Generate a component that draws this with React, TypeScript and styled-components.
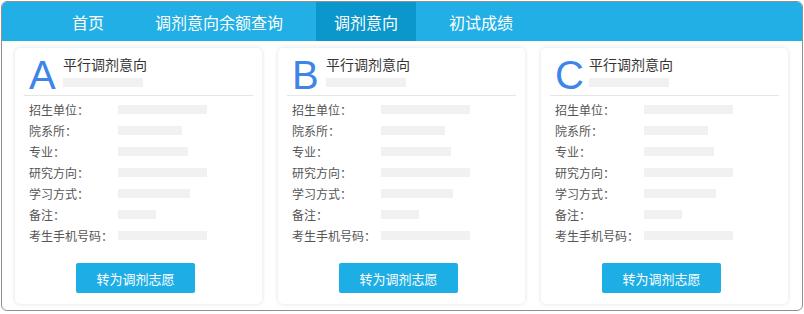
import styled, { createGlobalStyle } from "styled-components";

const GlobalStyle = createGlobalStyle`
  body {
    margin: 1px;
    background: #fff;
    font-family: "Liberation Sans", "Noto Sans CJK SC", sans-serif;
  }
`;

const Frame = styled.div`
  box-sizing: border-box;
  width: 802px;
  height: 310px;
  border: 1px solid #8f8f8f;
  border-radius: 6px;
  overflow: hidden;
  background: #fff;
`;

const Nav = styled.div`
  display: flex;
  gap: 15px;
  height: 39px;
  padding-left: 52px;
  background: #21afe6;
`;

const Tab = styled.div<{ $active?: boolean }>`
  display: flex;
  align-items: center;
  padding: 0 18px;
  font-family: "Noto Sans CJK SC", sans-serif;
  font-size: 16px;
  color: #fff;
  background: ${(p) => (p.$active ? "#0c97cc" : "transparent")};
`;

const Cards = styled.div`
  display: grid;
  grid-template-columns: repeat(3, 247px);
  column-gap: 16px;
  padding: 7px 13px 0;
`;

const Card = styled.div`
  display: flex;
  flex-direction: column;
  height: 256px;
  box-sizing: border-box;
  padding: 7px 9px 0;
  border-radius: 5px;
  background: #fff;
  box-shadow: 0 0 4px rgba(0, 0, 0, 0.13);
`;

const Header = styled.div`
  display: flex;
  height: 40px;
  padding: 0 5px;
  border-bottom: 1px solid #e6e6e6;
`;

const Letter = styled.div`
  width: 34px;
  font-size: 40px;
  line-height: 41px;
  color: #3d86e8;
`;

const TitleBox = styled.div`
  display: flex;
  flex-direction: column;
`;

const Title = styled.div`
  font-family: "Noto Sans CJK SC", sans-serif;
  font-size: 14px;
  line-height: 18px;
  color: #333;
`;

const Bar = styled.div<{ $w: number }>`
  width: ${(p) => p.$w}px;
  height: 9px;
  background: #f1f1f1;
`;

const TitleBar = styled(Bar)`
  margin-top: 5px;
`;

const Rows = styled.div`
  margin-top: 3px;
  padding: 0 5px;
`;

const Row = styled.div`
  display: flex;
  align-items: center;
  height: 21px;
`;

const Label = styled.div`
  width: 89px;
  font-family: "Noto Sans CJK SC", sans-serif;
  font-size: 12px;
  color: #555;
`;

const Button = styled.div`
  align-self: flex-start;
  margin: 17px 0 0 52px;
  width: 119px;
  height: 30px;
  border-radius: 2px;
  background: #1eaee6;
  color: #fff;
  font-family: "Noto Sans CJK SC", sans-serif;
  font-size: 13px;
  display: flex;
  align-items: center;
  justify-content: center;
`;

const fields: [string, number][] = [
  ["招生单位：", 89],
  ["院系所：", 64],
  ["专业：", 70],
  ["研究方向：", 89],
  ["学习方式：", 72],
  ["备注：", 38],
  ["考生手机号码：", 89],
];

const IntentCard = ({ letter }: { letter: string }) => (
  <Card>
    <Header>
      <Letter>{letter}</Letter>
      <TitleBox>
        <Title>平行调剂意向</Title>
        <TitleBar $w={80} />
      </TitleBox>
    </Header>
    <Rows>
      {fields.map(([label, w]) => (
        <Row key={label}>
          <Label>{label}</Label>
          <Bar $w={w} />
        </Row>
      ))}
    </Rows>
    <Button>转为调剂志愿</Button>
  </Card>
);

const App = () => (
  <>
    <GlobalStyle />
    <Frame>
      <Nav>
        <Tab>首页</Tab>
        <Tab>调剂意向余额查询</Tab>
        <Tab $active>调剂意向</Tab>
        <Tab>初试成绩</Tab>
      </Nav>
      <Cards>
        <IntentCard letter="A" />
        <IntentCard letter="B" />
        <IntentCard letter="C" />
      </Cards>
    </Frame>
  </>
);

export default App;
